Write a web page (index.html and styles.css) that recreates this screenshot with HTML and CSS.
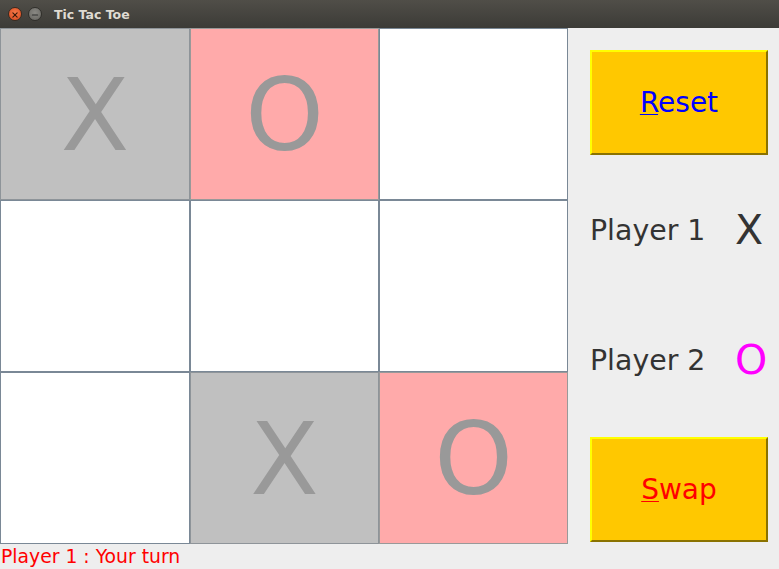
FILE: index.html
```html
<!DOCTYPE html>
<html>
<head>
<meta charset="utf-8">
<link rel="stylesheet" href="styles.css">
</head>
<body>
<div class="window">
  <div class="titlebar">
    <span class="tb-btn tb-close"><svg width="14" height="14" viewBox="0 0 14 14"><path d="M4.5 4.5 L9.5 9.5 M9.5 4.5 L4.5 9.5" stroke="#3a1a0a" stroke-width="1.3" stroke-linecap="round"/></svg></span>
    <span class="tb-btn tb-min"><svg width="14" height="14" viewBox="0 0 14 14"><path d="M4 7 L10 7" stroke="#2e2e2e" stroke-width="1.4" stroke-linecap="round"/></svg></span>
    <span class="tb-title">Tic Tac Toe</span>
  </div>
  <div class="content">
    <div class="left">
      <div class="board">
        <div class="cell x">X</div>
        <div class="cell o">O</div>
        <div class="cell"></div>
        <div class="cell"></div>
        <div class="cell"></div>
        <div class="cell"></div>
        <div class="cell"></div>
        <div class="cell x">X</div>
        <div class="cell o">O</div>
      </div>
      <div class="status">Player 1 : Your turn</div>
    </div>
    <div class="side">
      <div class="btn reset"><span><u>R</u>eset</span></div>
      <div class="players">
        <div class="player"><span class="pname">Player 1</span><span class="mark mark-x">X</span></div>
        <div class="player"><span class="pname">Player 2</span><span class="mark mark-o">O</span></div>
      </div>
      <div class="btn swap"><span><u>S</u>wap</span></div>
    </div>
  </div>
</div>
</body>
</html>
```
FILE: styles.css
```css
html, body {
  margin: 0;
  padding: 0;
  background: #eeeeee;
}
.window {
  width: 779px;
  height: 569px;
  overflow: hidden;
  font-family: "DejaVu Sans", sans-serif;
}
.titlebar {
  height: 28px;
  background: linear-gradient(#504e48, #3c3b37);
  display: flex;
  align-items: center;
  padding-left: 8px;
  box-sizing: border-box;
}
.tb-btn {
  width: 14px;
  height: 14px;
  border-radius: 50%;
  display: flex;
  margin-right: 6px;
}
.tb-close {
  background: radial-gradient(circle at 50% 40%, #f47a4a, #d9471c);
  border: 1px solid #3a2a20;
  box-sizing: border-box;
}
.tb-min {
  background: radial-gradient(circle at 50% 40%, #8a8984, #65645f);
  border: 1px solid #302f2b;
  box-sizing: border-box;
}
.tb-title {
  margin-left: 6px;
  color: #dfdbd2;
  font-weight: bold;
  font-size: 12.5px;
  font-family: "DejaVu Sans", sans-serif;
}
.content {
  display: flex;
  height: 541px;
}
.left {
  width: 568px;
  display: flex;
  flex-direction: column;
}
.board {
  display: grid;
  grid-template-columns: 190px 189px 189px;
  grid-template-rows: 172px 172px 172px;
}
.cell {
  background: #ffffff;
  border: 1px solid #7a8896;
  display: flex;
  align-items: center;
  justify-content: center;
  font-size: 100px;
  color: #999999;
  line-height: 1;
  padding-top: 4px;
  box-sizing: border-box;
}
.cell.x {
  background: #c0c0c0;
  border-color: #8e9499;
}
.cell.o {
  background: #ffaaaa;
  border-color: #999999;
}
.status {
  color: #ff0000;
  font-size: 18.8px;
  line-height: 25px;
  padding-left: 1px;
}
.side {
  width: 211px;
  padding: 22px 11px 0 22px;
  box-sizing: border-box;
  display: flex;
  flex-direction: column;
}
.btn {
  height: 105px;
  background: #ffc800;
  border-top: 2px solid #ffff00;
  border-left: 2px solid #ffff00;
  border-bottom: 2px solid #8a7200;
  border-right: 2px solid #8a7200;
  box-sizing: border-box;
  display: flex;
  align-items: center;
  justify-content: center;
  font-size: 28px;
}
.btn u {
  text-decoration-thickness: 1px;
  text-underline-offset: 2px;
}
.reset { color: #0000ff; }
.swap { color: #ff0000; }
.players {
  display: flex;
  flex-direction: column;
  padding-top: 10px;
  height: 282px;
  box-sizing: border-box;
}
.player {
  height: 130px;
  display: flex;
  align-items: center;
  justify-content: space-between;
  color: #333333;
}
.pname {
  font-size: 28.4px;
}
.mark {
  font-size: 41px;
  line-height: 1;
  width: 33px;
  text-align: left;
}
.mark-x { color: #333333; }
.mark-o { color: #ff00ff; }
```
